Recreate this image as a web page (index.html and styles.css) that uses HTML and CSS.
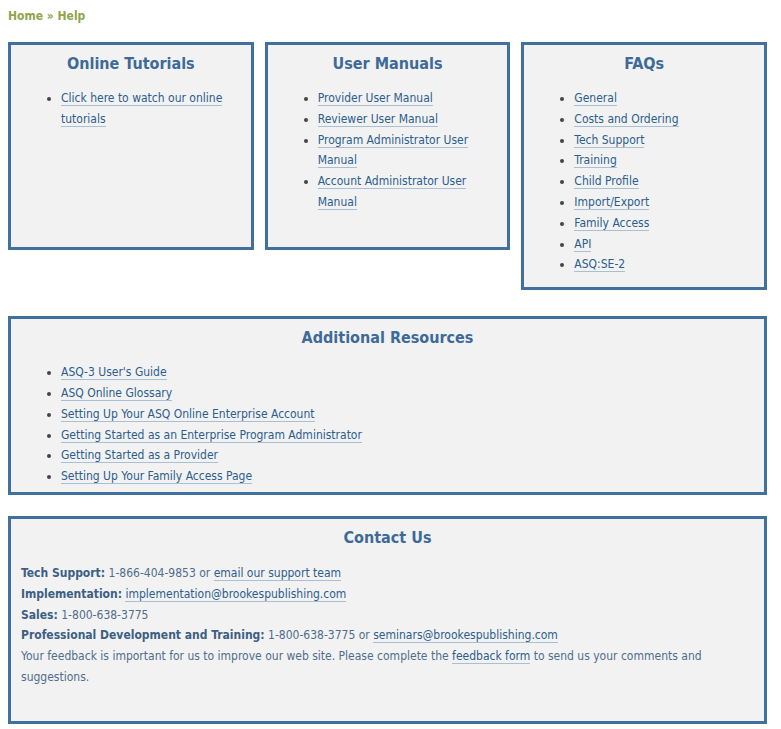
FILE: index.html
```
<!DOCTYPE html>
<html>
<head>
<meta charset="utf-8">
<link rel="stylesheet" href="styles.css">
</head>
<body>
<div class="breadcrumb"><a href="#">Home</a> » <span>Help</span></div>
<div class="row">
  <div class="box short">
    <h2>Online Tutorials</h2>
    <ul>
      <li><a href="#">Click here to watch our online tutorials</a></li>
    </ul>
  </div>
  <div class="box short">
    <h2>User Manuals</h2>
    <ul>
      <li><a href="#">Provider User Manual</a></li>
      <li><a href="#">Reviewer User Manual</a></li>
      <li><a href="#">Program Administrator User Manual</a></li>
      <li><a href="#">Account Administrator User Manual</a></li>
    </ul>
  </div>
  <div class="box">
    <h2>FAQs</h2>
    <ul>
      <li><a href="#">General</a></li>
      <li><a href="#">Costs and Ordering</a></li>
      <li><a href="#">Tech Support</a></li>
      <li><a href="#">Training</a></li>
      <li><a href="#">Child Profile</a></li>
      <li><a href="#">Import/Export</a></li>
      <li><a href="#">Family Access</a></li>
      <li><a href="#">API</a></li>
      <li><a href="#">ASQ:SE-2</a></li>
    </ul>
  </div>
</div>
<div class="box wide resources">
  <h2>Additional Resources</h2>
  <ul>
    <li><a href="#">ASQ-3 User's Guide</a></li>
    <li><a href="#">ASQ Online Glossary</a></li>
    <li><a href="#">Setting Up Your ASQ Online Enterprise Account</a></li>
    <li><a href="#">Getting Started as an Enterprise Program Administrator</a></li>
    <li><a href="#">Getting Started as a Provider</a></li>
    <li><a href="#">Setting Up Your Family Access Page</a></li>
  </ul>
</div>
<div class="box wide contact">
  <h2>Contact Us</h2>
  <div class="contact-body">
    <div><b>Tech Support:</b> 1-866-404-9853 or <a href="#">email our support team</a></div>
    <div><b>Implementation:</b> <a href="#">implementation@brookespublishing.com</a></div>
    <div><b>Sales:</b> 1-800-638-3775</div>
    <div><b>Professional Development and Training:</b> 1-800-638-3775 or <a href="#">seminars@brookespublishing.com</a></div>
    <div>Your feedback is important for us to improve our web site. Please complete the <a href="#">feedback form</a> to send us your comments and suggestions.</div>
  </div>
</div>
</body>
</html>
```

FILE: styles.css
```
html, body {
  background: #ffffff;
}
body {
  margin: 0;
  padding: 8px;
  font-family: "DejaVu Sans Condensed", "DejaVu Sans", sans-serif;
  font-size: 12px;
  color: #4f6d8c;
}
.breadcrumb {
  font-weight: bold;
  font-size: 12px;
  line-height: 16px;
  color: #8fa54c;
  height: 34px;
}
.breadcrumb a {
  color: #8fa54c;
  text-decoration: none;
  border-bottom: none;
}
.row {
  display: flex;
  align-items: flex-start;
  gap: 11px;
  width: 759px;
}
.box {
  box-sizing: border-box;
  border: 3px solid #41709f;
  background: #f2f2f2;
  padding: 0 10px 12px 10px;
}
.row .box {
  flex: 1 1 0;
  min-width: 0;
}
.box.short {
  min-height: 208px;
}
.box.wide {
  width: 759px;
}
.resources {
  margin-top: 26px;
  padding-bottom: 5px;
}
.contact {
  margin-top: 21px;
  padding-bottom: 33px;
}
h2 {
  margin: 9px 0 0 0;
  font-size: 16px;
  line-height: 20px;
  text-align: center;
  color: #3d6a98;
  font-weight: bold;
}
ul {
  margin: 14px 0 0 0;
  padding: 0 0 0 40px;
  line-height: 20.8px;
  color: #444;
}
li {
  padding: 0;
}
a {
  color: #2b5d8e;
  text-decoration: none;
  border-bottom: 1px solid #a9bfd3;
}
.contact-body {
  margin-top: 15px;
  line-height: 20.8px;
}
.contact-body b {
  color: #3b5f85;
}
```
